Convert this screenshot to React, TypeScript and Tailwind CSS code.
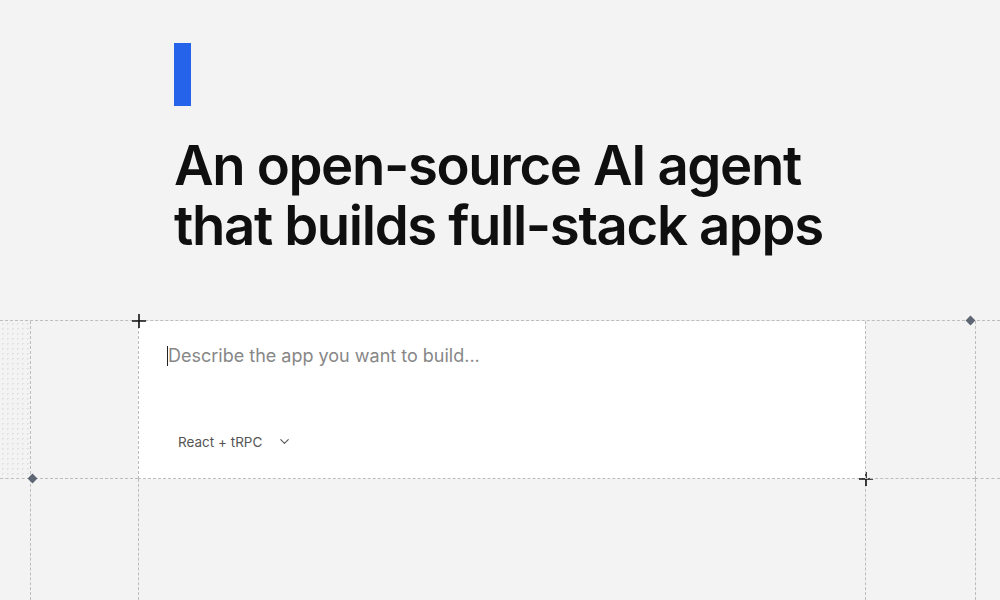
import { ChevronDown } from "lucide-react";

const dash = "border-dashed border-[#bdbdbd]";

function Plus({ className }: { className: string }) {
  return (
    <svg
      className={`absolute h-[14px] w-[14px] ${className}`}
      viewBox="0 0 14 14"
      fill="none"
      stroke="#111"
      strokeWidth="1.6"
    >
      <path d="M7 0v14M0 7h14" />
    </svg>
  );
}

function Diamond({ className }: { className: string }) {
  return <div className={`absolute h-[7px] w-[7px] rotate-45 bg-[#5f6673] ${className}`} />;
}

export default function App() {
  return (
    <div className="flex h-[600px] w-[1000px] flex-col overflow-hidden bg-[#f3f3f3] font-['Inter',sans-serif]">
      {/* Hero */}
      <div className="h-[320px] shrink-0 pl-[174px] pt-[43px]">
        <div className="h-[63px] w-[17px] bg-[#2563eb]" />
        <h1 className="mt-[29px] text-[54.5px] font-semibold leading-[60px] tracking-[-0.025em] text-[#0f0f0f]">
          An open-source AI agent
          <br />
          that builds full-stack apps
        </h1>
      </div>

      {/* Canvas grid */}
      <div className={`grid flex-1 grid-cols-[30px_108px_727px_110px_1fr] grid-rows-[158px_1fr] border-t ${dash}`}>
        <div className={`border-b ${dash} bg-[radial-gradient(#e2e2e2_1px,transparent_1px)] bg-[length:5px_5px]`} />
        <div className={`border-b border-l ${dash}`} />
        <div className={`relative flex flex-col border-b border-l bg-white ${dash}`}>
          <Plus className="-left-[7.5px] -top-[7.5px]" />
          <div className="flex items-center pl-[28px] pt-[22px]">
            <span className="h-[20px] w-px bg-[#222]" />
            <span className="text-[18px] leading-[26px] text-[#878787]">Describe the app you want to build...</span>
          </div>
          <div className="mt-auto flex items-center gap-[15px] pb-[26px] pl-[39px] text-[13.5px] text-[#555]">
            <span>React + tRPC</span>
            <ChevronDown className="h-[15px] w-[15px]" strokeWidth={1.8} />
          </div>
          <Plus className="-bottom-[7.5px] -right-[7.5px]" />
        </div>
        <div className={`relative border-b border-l ${dash}`}>
          <Diamond className="-top-[4px] right-[1px]" />
        </div>
        <div className={`border-b border-l ${dash}`} />

        <div />
        <div className={`relative border-l ${dash}`}>
          <Diamond className="-left-[2px] -top-[4px]" />
        </div>
        <div className={`border-l ${dash}`} />
        <div className={`border-l ${dash}`} />
        <div className={`border-l ${dash}`} />
      </div>
    </div>
  );
}
